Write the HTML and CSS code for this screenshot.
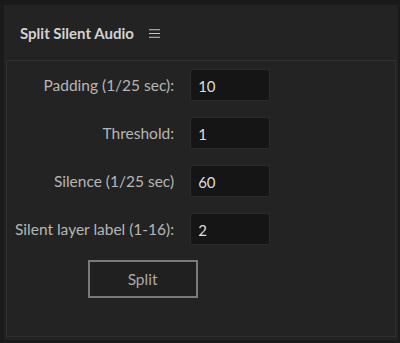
FILE: index.html
```html
<!DOCTYPE html>
<html lang="en">
<head>
    <meta charset="UTF-8">
    <title>Split Silent Audio</title>
    <link rel="stylesheet" href="styles.css">
</head>
<body>
    <div class="panel">
        <div class="panel-header">
            <h1>Split Silent Audio</h1>
            <span class="menu-icon">
                <svg width="11" height="9" viewBox="0 0 11 9">
                    <path d="M0 0.75H11M0 4.5H11M0 8.25H11" stroke="#c8c8c8" stroke-width="1.2"/>
                </svg>
            </span>
        </div>
        <div class="panel-body">
            <div class="form-grid">
                <label for="padding">Padding (1/25 sec):</label>
                <input type="text" id="padding" value="10">

                <label for="threshold">Threshold:</label>
                <input type="text" id="threshold" value="1">

                <label for="silence">Silence (1/25 sec)</label>
                <input type="text" id="silence" value="60">

                <label for="layer-label">Silent layer label (1-16):</label>
                <input type="text" id="layer-label" value="2">

                <button class="split-btn">Split</button>
            </div>
        </div>
    </div>
</body>
</html>
```

FILE: styles.css
```css
* {
    margin: 0;
    padding: 0;
    box-sizing: border-box;
    font-family: Lato, "Open Sans", sans-serif;
}
body {
    background: #1a1a1a;
    padding: 5px 2px 3px 4px;
    height: 343px;
}
.panel {
    height: 335px;
    background: #232323;
    display: flex;
    flex-direction: column;
}
.panel-header {
    height: 55px;
    display: flex;
    align-items: center;
    padding: 0 0 0 16px;
    gap: 15px;
}
.panel-header h1 {
    font-size: 15px;
    font-weight: 700;
    color: #d2d2d2;
}
.menu-icon {
    display: flex;
    margin-top: 2px;
}
.panel-body {
    flex: 1;
    margin: 0 2px 3px 2px;
    border: 1px solid #2f2f2f;
    padding: 8px 0 0 8px;
}
.form-grid {
    display: grid;
    grid-template-columns: auto 80px;
    column-gap: 16px;
    row-gap: 16px;
    width: fit-content;
    align-items: center;
}
.form-grid label {
    text-align: right;
    font-size: 15.5px;
    color: #b6b6b6;
}
.form-grid input {
    height: 32px;
    background: #151515;
    border: 1px solid #2c2c2c;
    border-radius: 3px;
    color: #dedede;
    font-size: 15px;
    padding: 2px 0 0 7px;
    outline: none;
    width: 80px;
}
.split-btn {
    grid-column: 1 / span 2;
    justify-self: center;
    width: 110px;
    height: 38px;
    margin-top: -1px;
    background: #202020;
    border: 2px solid #7a7a7a;
    color: #ababab;
    font-size: 15.5px;
}
```
